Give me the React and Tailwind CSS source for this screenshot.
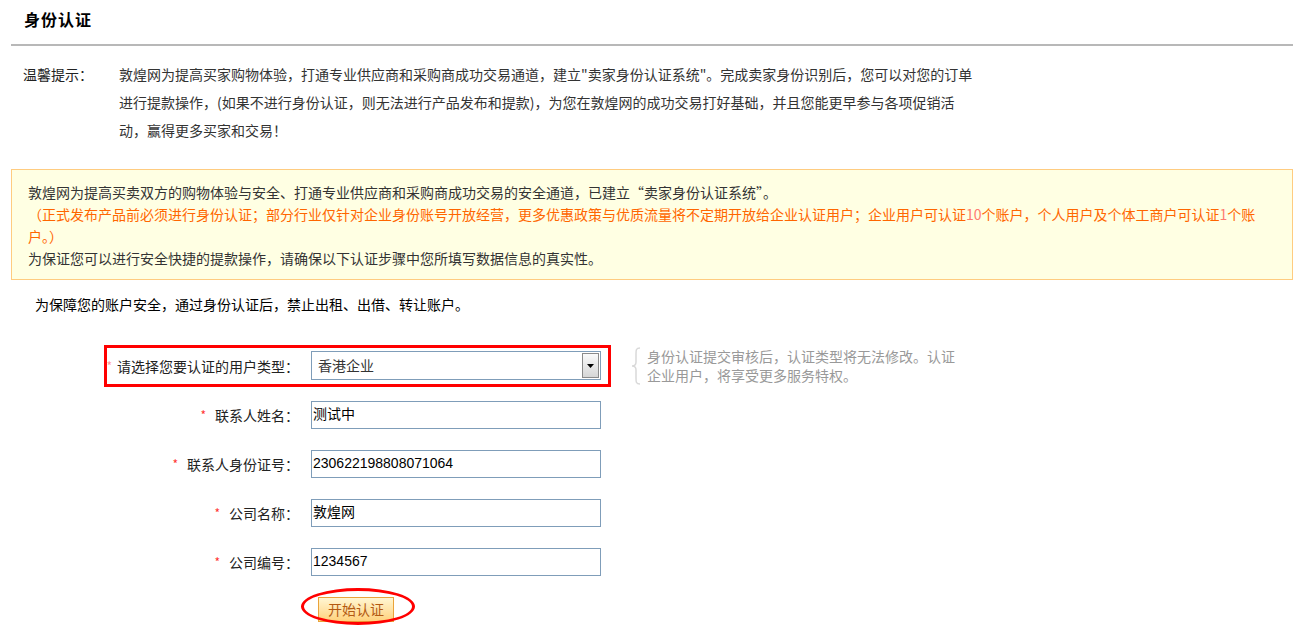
import React from 'react'

const cjk = "font-['Noto_Sans_CJK_SC',sans-serif]"
const mixed = "font-['Liberation_Sans','Noto_Sans_CJK_SC',sans-serif]"

// one labelled row of the form
const FieldRow = ({ label, value }) => (
  <div className="flex h-[49px] items-center pl-[96px]">
    <div className="flex w-[204px] items-center justify-end whitespace-nowrap pr-[12px]">
      <span className="mr-[9px] shrink-0 text-[12px] leading-none text-[#ff3333]">*</span>
      <span className="shrink-0 text-[14px] leading-[20px] text-[#222]">{label}</span>
    </div>
    <div className={`flex h-[28px] w-[290px] items-center border border-[#7f9db9] bg-white pl-[1px] text-[14px] text-black ${mixed}`}>
      {value}
    </div>
  </div>
)

const Brace = () => (
  <svg width="10" height="38" viewBox="0 0 10 38" className="mr-[6px] shrink-0">
    <path
      d="M9 1 C5 1 5 3 5 7 L5 15 C5 18 3 19 1 19 C3 19 5 20 5 23 L5 31 C5 35 5 37 9 37"
      fill="none"
      stroke="#d9d9d9"
      strokeWidth="1.5"
    />
  </svg>
)

export default function App() {
  return (
    <div className={`min-h-[633px] w-[1306px] bg-white ${cjk}`}>
      <div className="ml-[11px] w-[1282px]">

        {/* TITLE */}
        <div className="border-b-2 border-[#b8b8b8] pb-[15px] pl-[13px] pt-[9px]">
          <h1 className="text-[16px] font-bold leading-[20px] tracking-[1px] text-black">身份认证</h1>
        </div>

        {/* TIPS */}
        <div className="mt-[14px] flex text-[14px] leading-[28px] text-[#333]">
          <div className="w-[108px] shrink-0 pl-[12px] text-[#222]">温馨提示：</div>
          <p className="w-[862px]">
            敦煌网为提高买家购物体验，打通专业供应商和采购商成功交易通道，建立"卖家身份认证系统"。完成卖家身份识别后，您可以对您的订单进行提款操作，(如果不进行身份认证，则无法进行产品发布和提款)，为您在敦煌网的成功交易打好基础，并且您能更早参与各项促销活动，赢得更多买家和交易！
          </p>
        </div>

        {/* NOTICE BOX */}
        <div className="mt-[25px] border border-[#ffcc80] bg-[#ffffe3] pb-[10px] pl-[16px] pr-[16px] pt-[11px] text-[14px] leading-[22px]">
          <p className="text-[#333]">
            敦煌网为提高买卖双方的购物体验与安全、打通专业供应商和采购商成功交易的安全通道，已建立“卖家身份认证系统”。
          </p>
          <p className="text-[#ff6600]">
            （正式发布产品前必须进行身份认证；部分行业仅针对企业身份账号开放经营，更多优惠政策与优质流量将不定期开放给企业认证用户；企业用户可认证<span className="text-[#ff7a70]">10</span>个账户，个人用户及个体工商户可认证<span className="text-[#ff7a70]">1</span>个账
            <br />
            户。）
          </p>
          <p className="text-[#333]">为保证您可以进行安全快捷的提款操作，请确保以下认证步骤中您所填写数据信息的真实性。</p>
        </div>

        <p className="mt-[13px] pl-[24px] text-[14px] leading-[22px] text-black">
          为保障您的账户安全，通过身份认证后，禁止出租、出借、转让账户。
        </p>

        {/* FORM */}
        <div className="mt-[26px]">
          <div className="flex h-[49px] items-center">
            <div className="ml-[93px] flex h-[42px] items-center border-[3px] border-[#ff0000] pr-[7px]">
              <div className="flex w-[204px] items-center justify-end whitespace-nowrap pr-[12px]">
                <span className="mr-[5px] shrink-0 text-[12px] leading-none text-[#ff9999]">*</span>
                <span className="shrink-0 text-[14px] leading-[20px] text-[#222]">请选择您要认证的用户类型：</span>
              </div>
              <div className="flex h-[29px] w-[290px] items-center border border-[#7f9db9] bg-white">
                <span className="flex-1 pl-[6px] text-[14px] text-[#333]">香港企业</span>
                <div className="m-[1px] flex h-[25px] w-[17px] items-center justify-center border border-[#8a8a8a] bg-gradient-to-b from-[#fafafa] to-[#d6d6d6]">
                  <svg width="7" height="4" viewBox="0 0 7 4">
                    <path d="M0 0 L7 0 L3.5 4 Z" fill="#000" />
                  </svg>
                </div>
              </div>
            </div>
            <div className="ml-[20px] flex items-start">
              <Brace />
              <p className="w-[312px] text-[14px] leading-[19px] text-[#999]">
                身份认证提交审核后，认证类型将无法修改。认证企业用户，将享受更多服务特权。
              </p>
            </div>
          </div>

          <FieldRow label="联系人姓名：" value="测试中" />
          <FieldRow label="联系人身份证号：" value="230622198808071064" />
          <FieldRow label="公司名称：" value="敦煌网" />
          <FieldRow label="公司编号：" value="1234567" />

          <div className="mt-[10px] pl-[307px]">
            <div className="relative inline-block">
              <button className="h-[25px] w-[76px] border border-[#eaa33a] bg-gradient-to-b from-[#fff6d2] to-[#ffd27c] text-[14px] leading-[20px] text-[#b35a12]">
                开始认证
              </button>
              <div className="pointer-events-none absolute left-[-17px] top-[-8px] h-[37px] w-[114px] rounded-[50%] border-[3px] border-[#ff0000]" />
            </div>
          </div>
        </div>
      </div>
    </div>
  )
}
